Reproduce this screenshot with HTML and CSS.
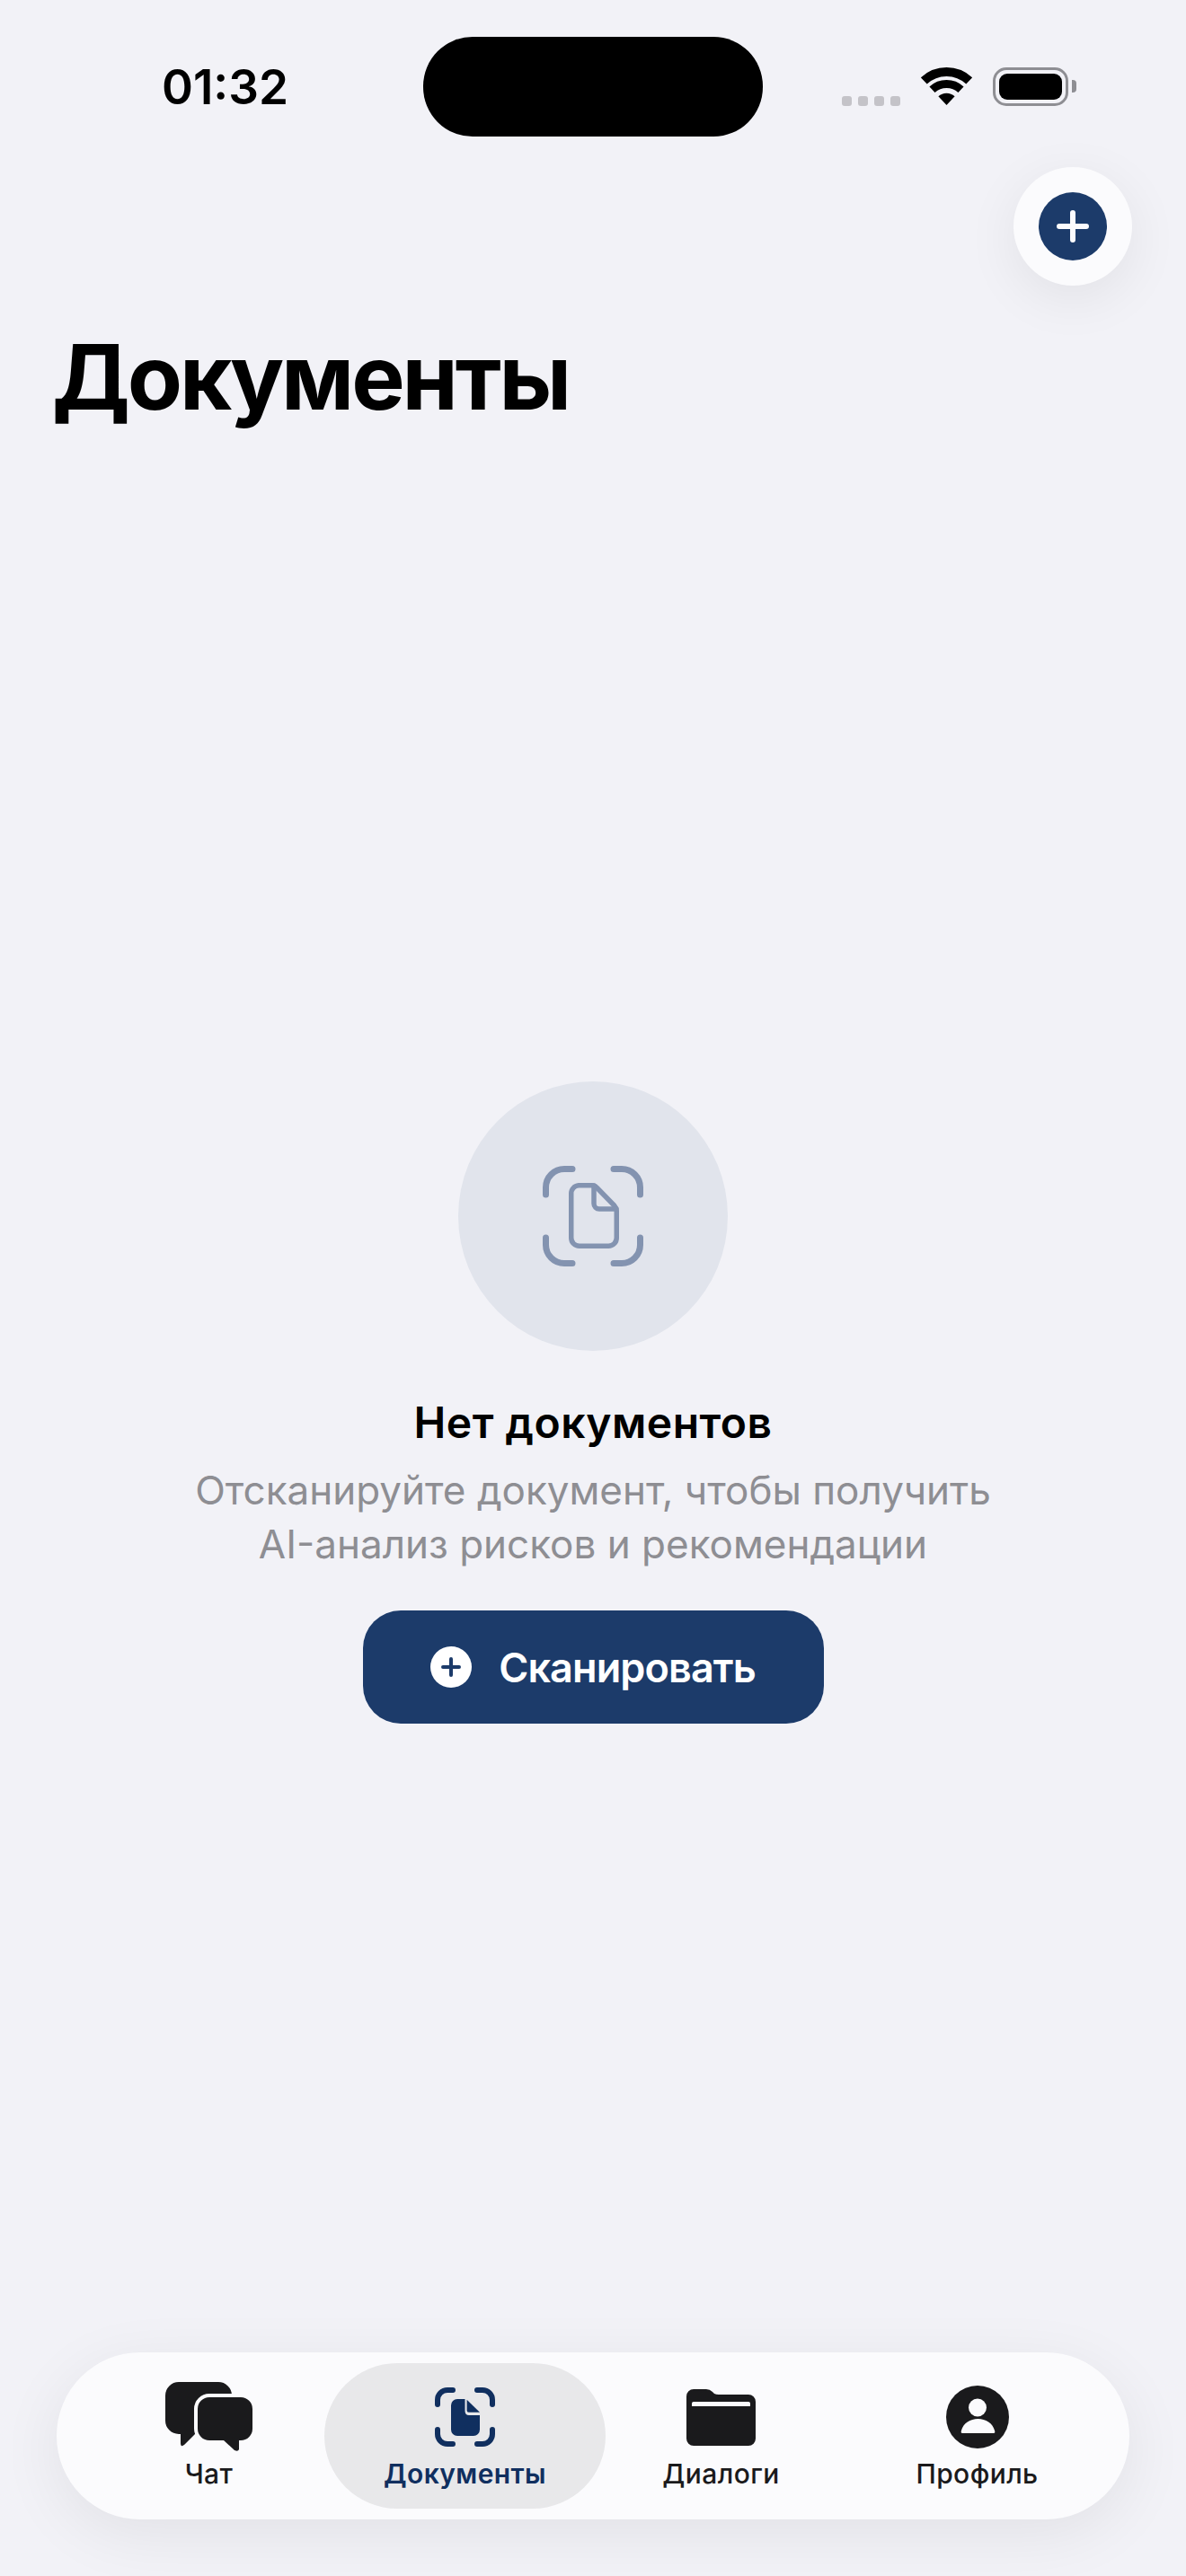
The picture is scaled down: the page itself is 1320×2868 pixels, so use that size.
FILE: index.html
```html
<!DOCTYPE html>
<html lang="ru">
<head>
    <meta charset="UTF-8">
    <meta name="viewport" content="width=device-width, initial-scale=1.0">
    <title>Документы</title>
    <link rel="stylesheet" href="styles.css">
</head>
<body>
    <div class="screen">
        <div class="status-bar">
            <div class="time">01:32</div>
            <div class="island"></div>
            <div class="status-icons">
                <div class="signal">
                    <span></span><span></span><span></span><span></span>
                </div>
                <svg class="wifi" viewBox="0 0 57 42">
                    <path d="M3.3 14.95A37 37 0 0 1 53.7 14.95" fill="none" stroke="#000" stroke-width="10"/>
                    <path d="M12.5 24.8A23.5 23.5 0 0 1 44.5 24.8" fill="none" stroke="#000" stroke-width="9"/>
                    <path d="M28.5 42L19.4 32.3A13.3 13.3 0 0 1 37.6 32.3Z" fill="#000"/>
                </svg>
                <div class="battery">
                    <div class="battery-fill"></div>
                </div>
                <div class="battery-nub"></div>
            </div>
        </div>

        <div class="top-actions">
            <button class="fab">
                <span class="fab-inner">
                    <svg class="fab-plus" viewBox="0 0 36 36">
                        <path d="M18 3V33M3 18H33" fill="none" stroke="#fbfbfd" stroke-width="6" stroke-linecap="round"/>
                    </svg>
                </span>
            </button>
        </div>

        <h1 class="page-title">Документы</h1>

        <div class="empty">
            <div class="empty-circle">
                <svg class="empty-icon" viewBox="0 0 112 112" fill="none" stroke="#8393b0" stroke-linecap="round" stroke-linejoin="round">
                    <g stroke-width="7">
                        <path d="M3.5 32V24A20.5 20.5 0 0 1 24 3.5H33"/>
                        <path d="M79 3.5H88A20.5 20.5 0 0 1 108.500 24V32"/>
                        <path d="M3.500 80V88A20.5 20.500 0 0 0 24 108.500H33"/>
                        <path d="M79 108.500H88A20.500 20.500 0 0 0 108.500 88V80"/>
                    </g>
                    <g stroke-width="5.500">
                        <path d="M40 21.750H55Q58 21.750 60 24L80 44.500Q82.250 47 82.250 50V80A9 9 0 0 1 73 89.250H41A9 9 0 0 1 31.750 80V31A9 9 0 0 1 40 21.750Z"/>
                        <path d="M57 22V42A6 6 0 0 0 63 48H82"/>
                    </g>
                </svg>
            </div>
            <h2 class="empty-title">Нет документов</h2>
            <p class="empty-text">Отсканируйте документ, чтобы получить<br>AI-анализ рисков и рекомендации</p>
            <button class="scan-btn">
                <svg class="scan-plus" viewBox="0 0 46 46">
                    <circle cx="23" cy="23" r="23" fill="#fff"/>
                    <path d="M23 14V32M14 23H32" fill="none" stroke="#1c3b6a" stroke-width="4" stroke-linecap="round"/>
                </svg>
                <span>Сканировать</span>
            </button>
        </div>

        <nav class="tabbar">
            <div class="tab">
                <div class="tab-icon">
                    <svg class="icon-chat" viewBox="0 0 98 78">
                        <path fill="#1a1a1c" d="M15 0H59A15 15 0 0 1 74 15V43A15 15 0 0 1 59 58H33L21 70Q17 73 17 68V58H15A15 15 0 0 1 0 43V15A15 15 0 0 1 15 0Z"/>
                        <path fill="#1a1a1c" stroke="#fbfbfd" stroke-width="8" paint-order="stroke" d="M49 17H84A13 13 0 0 1 97 30V52A13 13 0 0 1 84 65H82V75Q81 78 77 76L65 65H49A13 13 0 0 1 36 52V30A13 13 0 0 1 49 17Z"/>
                    </svg>
                </div>
                <span class="tab-label">Чат</span>
            </div>
            <div class="tab active">
                <div class="tab-icon">
                    <svg class="icon-scan" viewBox="0 0 67 66">
                        <g fill="none" stroke="#102f5f" stroke-width="6" stroke-linecap="round">
                            <path d="M3 19V14A11 11 0 0 1 14 3H20"/>
                            <path d="M47 3H53A11 11 0 0 1 64 14V19"/>
                            <path d="M3 47V52A11 11 0 0 0 14 63H20"/>
                            <path d="M47 63H53A11 11 0 0 0 64 52V47"/>
                        </g>
                        <path fill="#102f5f" d="M25 13H33.500V26Q33.500 31 38 31H50V47A7 7 0 0 1 43 54H25A7 7 0 0 1 18 47V20A7 7 0 0 1 25 13Z"/>
                        <path fill="#102f5f" d="M35.600 13.700L50 27.700H37.600Q35.600 27.700 35.600 25.700Z"/>
                    </svg>
                </div>
                <span class="tab-label">Документы</span>
            </div>
            <div class="tab">
                <div class="tab-icon">
                    <svg class="icon-folder" viewBox="0 0 77 63">
                        <path fill="#1a1a1c" d="M8 0H22Q26 0 29 3L31 5Q33 6 36 6H69A8 8 0 0 1 77 14V55A8 8 0 0 1 69 63H8A8 8 0 0 1 0 55V8A8 8 0 0 1 8 0Z"/>
                        <path fill="#fbfbfd" d="M8 14H69Q71 14 71 16V19H6V16Q6 14 8 14Z"/>
                    </svg>
                </div>
                <span class="tab-label">Диалоги</span>
            </div>
            <div class="tab">
                <div class="tab-icon">
                    <svg class="icon-profile" viewBox="0 0 70 70">
                        <circle cx="35" cy="35" r="35" fill="#1a1a1c"/>
                        <circle cx="35" cy="24.500" r="10" fill="#fbfbfd"/>
                        <path fill="#fbfbfd" d="M18 53Q16 53 17 50C19 42 27 37 35.500 37C44 37 52 42 54 50Q55 53 53 53Z"/>
                    </svg>
                </div>
                <span class="tab-label">Профиль</span>
            </div>
        </nav>
    </div>
</body>
</html>
```

FILE: styles.css
```css
body {
    margin: 0;
    background: #f2f2f7;
    font-family: 'Inter', 'Liberation Sans', sans-serif;
    color: #000;
}

button {
    border: none;
    padding: 0;
    font-family: inherit;
}

.screen {
    width: 1320px;
    height: 2868px;
    display: flex;
    flex-direction: column;
    overflow: hidden;
}

/* status bar */
.status-bar {
    display: grid;
    grid-template-columns: 471px 378px 1fr;
    align-items: center;
    padding-top: 41px;
}

.time {
    padding-left: 180px;
    font-size: 53px;
    line-height: 60px;
    font-weight: 600;
}

.island {
    height: 111px;
    border-radius: 55px;
    background: #000;
}

.status-icons {
    display: flex;
    align-items: center;
    padding-left: 88px;
    margin-top: -1px;
}

.signal {
    display: flex;
    gap: 7px;
    margin-top: 32px;
    margin-right: 23px;
}

.signal span {
    width: 11px;
    height: 11px;
    border-radius: 3px;
    background: #c4c3c8;
}

.wifi {
    width: 57px;
    height: 42px;
    margin-right: 23px;
}

.battery {
    box-sizing: border-box;
    width: 84px;
    height: 43px;
    padding: 4px;
    border: 3px solid #8e8e93;
    border-radius: 15px;
}

.battery-fill {
    height: 100%;
    border-radius: 9px;
    background: #000;
}

.battery-nub {
    width: 5px;
    height: 14px;
    margin-left: 4px;
    border-radius: 0 4px 4px 0;
    background: #8e8e93;
}

/* header */
.top-actions {
    display: flex;
    justify-content: flex-end;
    padding: 34px 60px 0 0;
}

.fab {
    width: 132px;
    height: 132px;
    display: flex;
    align-items: center;
    justify-content: center;
    border-radius: 50%;
    background: #fbfbfd;
    box-shadow: 0 14px 60px rgba(0, 0, 0, 0.07);
}

.fab-inner {
    width: 76px;
    height: 76px;
    display: flex;
    align-items: center;
    justify-content: center;
    border-radius: 50%;
    background: #1c3b6a;
}

.fab-plus {
    width: 36px;
    height: 36px;
}

.page-title {
    margin: 40px 0 0 58px;
    font-size: 100px;
    line-height: 124px;
    font-weight: 700;
    letter-spacing: -3.1px;
}

/* empty state */
.empty {
    display: flex;
    flex-direction: column;
    align-items: center;
    margin-top: 722px;
}

.empty-circle {
    width: 300px;
    height: 300px;
    display: flex;
    align-items: center;
    justify-content: center;
    border-radius: 50%;
    background: #e1e4ec;
}

.empty-icon {
    width: 112px;
    height: 112px;
}

.empty-title {
    margin: 50px 0 0;
    font-size: 48px;
    line-height: 60px;
    font-weight: 600;
    letter-spacing: 0.5px;
}

.empty-text {
    margin: 15px 0 0;
    font-size: 44px;
    line-height: 60px;
    text-align: center;
    color: #8e8e93;
}

.scan-btn {
    width: 513px;
    height: 126px;
    margin-top: 44px;
    display: flex;
    align-items: center;
    justify-content: center;
    gap: 30px;
    border-radius: 42px;
    background: #1c3b6a;
    color: #fff;
    font-size: 45px;
    font-weight: 600;
    letter-spacing: -0.9px;
}

.scan-plus {
    width: 46px;
    height: 46px;
}

/* tab bar */
.tabbar {
    display: grid;
    grid-template-columns: repeat(4, 285px);
    box-sizing: border-box;
    height: 186px;
    margin: auto 63px 63px;
    padding: 12px 27px;
    border-radius: 93px;
    background: #fbfbfd;
    box-shadow: 0 16px 70px rgba(0, 0, 0, 0.07);
}

.tab {
    display: flex;
    flex-direction: column;
    align-items: center;
    height: 162px;
    color: #1a1a1c;
}

.tab.active {
    margin: 0 -14px;
    border-radius: 81px;
    background: #e8e8ea;
    color: #102f5f;
}

.tab-icon {
    height: 88px;
    display: flex;
    align-items: center;
    justify-content: center;
    padding-top: 16px;
}

.tab-label {
    font-size: 30px;
    line-height: 38px;
    font-weight: 500;
    letter-spacing: 0.4px;
}

.tab.active .tab-label {
    font-weight: 600;
}

.icon-chat {
    width: 98px;
    height: 78px;
}

.icon-scan {
    width: 67px;
    height: 66px;
}

.icon-folder {
    width: 77px;
    height: 63px;
}

.icon-profile {
    width: 70px;
    height: 70px;
}
```
